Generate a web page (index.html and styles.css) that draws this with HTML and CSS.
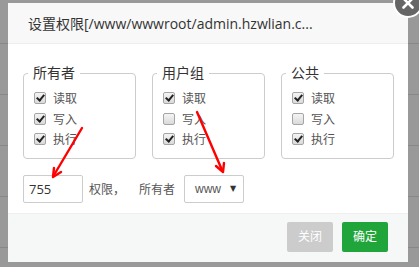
FILE: index.html
```html
<html>
  <head>
    <title>设置权限</title>
    <link rel="stylesheet" href="styles.css">
  </head>

  <body>
    <div id="fundo"></div>
    <div class="layer">
      <div class="layer-title">设置权限[/www/wwwroot/admin.hzwlian.c...</div>
      <span class="layer-close">
        <svg width="12" height="12" viewBox="0 0 12 12">
          <path d="M1.5 1.5 L10.5 10.5 M10.5 1.5 L1.5 10.5" stroke="#fff" stroke-width="2.6" stroke-linecap="round" />
        </svg>
      </span>

      <div class="layer-content">
        <div class="grupos">
          <fieldset class="grupo">
            <legend>所有者</legend>
            <div class="linha"><span class="ck on"></span>读取</div>
            <div class="linha"><span class="ck on"></span>写入</div>
            <div class="linha"><span class="ck on"></span>执行</div>
          </fieldset>
          <fieldset class="grupo">
            <legend>用户组</legend>
            <div class="linha"><span class="ck on"></span>读取</div>
            <div class="linha"><span class="ck"></span>写入</div>
            <div class="linha"><span class="ck on"></span>执行</div>
          </fieldset>
          <fieldset class="grupo">
            <legend>公共</legend>
            <div class="linha"><span class="ck on"></span>读取</div>
            <div class="linha"><span class="ck"></span>写入</div>
            <div class="linha"><span class="ck on"></span>执行</div>
          </fieldset>
        </div>

        <div class="rodape">
          <span class="campo">755</span>
          <span class="txt-permissao">权限，</span>
          <span class="txt-dono">所有者</span>
          <span class="seletor">www<i class="seta">&#9660;</i></span>
        </div>
      </div>

      <div class="layer-btns">
        <span class="btn btn-off">关闭</span>
        <span class="btn btn-ok">确定</span>
      </div>
    </div>

    <svg class="setas" width="419" height="267" viewBox="0 0 419 267">
      <g stroke="#f00" stroke-width="2.4" fill="none" stroke-linecap="round">
        <path d="M82 128 L54 175" />
        <path d="M53 177 L54 168 M53 177 L61 172" />
        <path d="M197 112 L222 170" />
        <path d="M223 172 L216 166 M223 172 L224 163" />
      </g>
    </svg>
  </body>
</html>
```

FILE: styles.css
```css
* {
  margin: 0;
  padding: 0;
  box-sizing: border-box;
}

body {
  width: 419px;
  height: 267px;
  overflow: hidden;
  background: #999;
  font-family: "Open Sans", "Noto Sans CJK SC", sans-serif;
  position: relative;
}

#fundo {
  height: 267px;
  background: repeating-linear-gradient(
    to bottom,
    transparent 0,
    transparent 44px,
    #888 44px,
    #888 45px,
    transparent 45px,
    transparent 51px
  );
  background-position: 0 -1px;
}

.layer {
  position: absolute;
  left: 8px;
  top: 3px;
  width: 400px;
  height: 259px;
  background: #fff;
}

.layer-title {
  height: 41px;
  line-height: 42px;
  padding-left: 20px;
  font-size: 14px;
  color: #333;
  background: #f8f8f8;
  border-bottom: 1px solid #eee;
  white-space: nowrap;
}

.layer-close {
  position: absolute;
  top: -15px;
  right: -15px;
  width: 30px;
  height: 30px;
  border-radius: 50%;
  background: #666;
  border: 2px solid #fff;
  display: flex;
  align-items: center;
  justify-content: center;
}

.layer-content {
  height: 169px;
  padding: 19px 14px 0 15px;
}

.grupos {
  display: flex;
  gap: 16px;
}

.grupo {
  flex: 1;
  min-width: 0;
  border: 1px solid #ccc;
  border-radius: 4px;
  padding: 5px 10px 8px;
}

.grupo legend {
  margin-left: -6px;
  padding: 0 5px;
  font-size: 14px;
  line-height: 20px;
  color: #333;
}

.linha {
  display: flex;
  align-items: center;
  height: 20.5px;
  font-size: 12px;
  color: #555;
}

.ck {
  width: 12px;
  height: 12px;
  margin-right: 7px;
  border: 1px solid #a5a5a5;
  border-radius: 2px;
  background: linear-gradient(#f4f4f4, #dadada);
  position: relative;
}

.ck.on::after {
  content: "";
  position: absolute;
  left: 3px;
  top: 0px;
  width: 3px;
  height: 6px;
  border-right: 2px solid #222;
  border-bottom: 2px solid #222;
  transform: rotate(40deg);
}

.rodape {
  display: flex;
  align-items: center;
  margin-top: 16px;
  font-size: 12px;
  color: #555;
}

.campo {
  width: 60px;
  height: 28px;
  line-height: 26px;
  padding-left: 5px;
  border: 1px solid #ccc;
  border-radius: 2px;
  font-size: 13px;
  color: #333;
}

.txt-permissao {
  margin-left: 6px;
}

.txt-dono {
  margin-left: 14px;
}

.seletor {
  width: 60px;
  height: 28px;
  line-height: 26px;
  margin-left: 9px;
  padding-left: 10px;
  border: 1px solid #ccc;
  border-radius: 2px;
  font-family: "Liberation Sans", sans-serif;
  font-size: 12px;
  color: #555;
  position: relative;
}

.seta {
  position: absolute;
  right: 7px;
  top: 0;
  font-style: normal;
  font-family: "DejaVu Sans", sans-serif;
  font-size: 8px;
  color: #333;
}

.layer-btns {
  height: 49px;
  border-top: 1px solid #eee;
  background: #f6f7f7;
  display: flex;
  justify-content: flex-end;
  gap: 9px;
  padding: 8px 20px 0 0;
}

.btn {
  width: 46px;
  height: 30px;
  line-height: 30px;
  text-align: center;
  font-size: 12px;
  color: #fff;
  border-radius: 2px;
}

.btn-off {
  background: #ccc;
}

.btn-ok {
  background: #20a53a;
}

.setas {
  position: absolute;
  left: 0;
  top: 0;
}
```
